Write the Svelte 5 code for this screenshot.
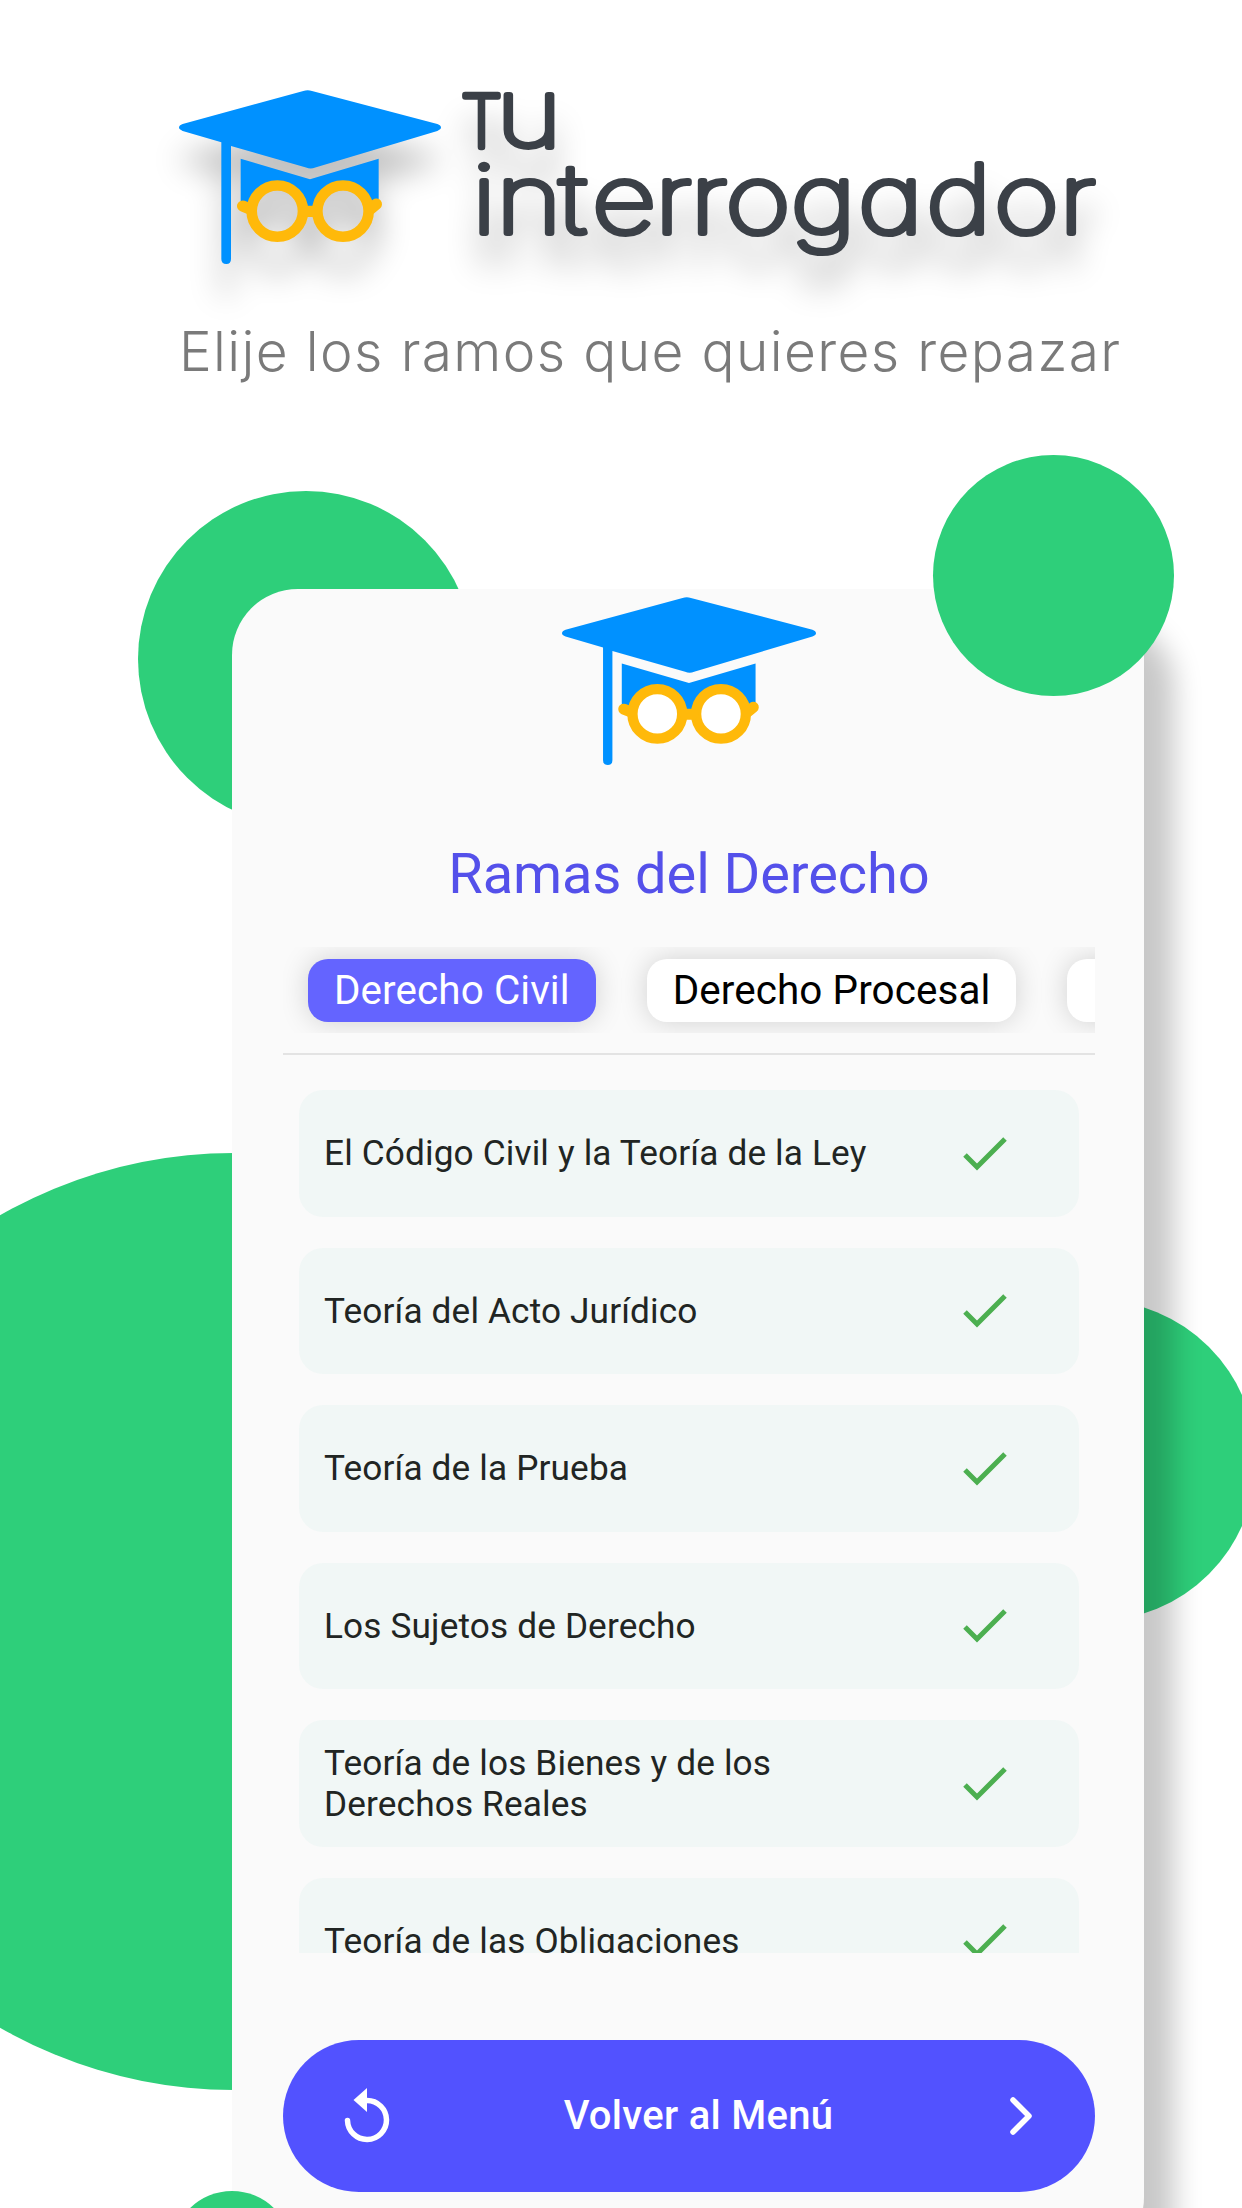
<script lang="ts">
    const tabs: string[] = ['Derecho Civil', 'Derecho Procesal', 'Derecho Penal'];

    const topics: string[] = [
        'El Código Civil y la Teoría de la Ley',
        'Teoría del Acto Jurídico',
        'Teoría de la Prueba',
        'Los Sujetos de Derecho',
        'Teoría de los Bienes y de los Derechos Reales',
        'Teoría de las Obligaciones',
    ];

    let activeTab = $state(0);
</script>

{#snippet cap(lens: string)}
    <svg class="cap" viewBox="57 59 786 523" preserveAspectRatio="none">
        <path class="blue" d="M430 62 Q443 58 456 62 L832 161 Q843 165 843 172 Q843 178 832 182 L466 292 Q452 298 438 292 L213 227 V567 Q213 582 199 582 Q184 582 184 567 V216 L68 182 Q57 178 57 172 Q57 165 68 161 Z" />
        <path class="blue" d="M242 266 L450 327 L656 266 V400 L626 423 A77 77 0 0 0 472 423 H429 A77 77 0 0 0 275 423 L242 400 Z" />
        <circle cx="352" cy="423" r="77" fill={lens} class="rim" />
        <circle cx="549" cy="423" r="77" fill={lens} class="rim" />
        <path class="arms" d="M248 408 L268 416 M632 416 L649 402" />
        <path class="bridge" d="M438 424 H462" />
    </svg>
{/snippet}

<div class="page">
    <div class="circle c1"></div>
    <div class="circle c2"></div>
    <div class="circle c3"></div>

    <header>
        <div class="brand">
            <div class="brand_cap">{@render cap('none')}</div>
            <svg class="wordmark" viewBox="0 0 660 190">
                <text class="t" x="0" y="56.800" textLength="41" lengthAdjust="spacingAndGlyphs">T</text>
                <g transform="scale(1.18 1)">
                    <text class="u" x="29.800" y="56.800">u</text>
                    <text class="word" x="9.4 29.8 83.4 111.1 164.5 194.6 224.2 279.4 336.5 394.2 451.8 507" y="143.500">interrogador</text>
                </g>
            </svg>
        </div>
        <p class="tagline">Elije los ramos que quieres repazar</p>
    </header>

    <main class="phone">
        <div class="phone_cap">{@render cap('#ffffff')}</div>
        <h1>Ramas del Derecho</h1>

        <nav class="tabs">
            {#each tabs as tab, i}
                <button class="tab" class:active={i === activeTab} onclick={() => (activeTab = i)}>{tab}</button>
            {/each}
        </nav>

        <ul class="topics">
            {#each topics as topic}
                <li>
                    <span>{topic}</span>
                    <svg class="check" width="46" height="36" viewBox="0 0 46 36">
                        <path d="M3 19 L15 31 L43 3" />
                    </svg>
                </li>
            {/each}
        </ul>

        <button class="back">
            <svg width="46" height="56" viewBox="0 0 46 56">
                <path class="line" d="M3.500 32.500 A19.500 19.500 0 1 0 23 12.500" />
                <path class="tip" d="M23 0 V24 L9.500 12 Z" />
            </svg>
            <span>Volver al Menú</span>
            <svg width="22" height="38" viewBox="0 0 22 38">
                <path class="line" d="M3 3 L19 19 L3 35" />
            </svg>
        </button>
    </main>

    <div class="circle c4"></div>
    <div class="circle c5"></div>
</div>

<style>
    :global(body) {
        background: #fff;
    }

    .page {
        position: relative;
        width: 1242px;
        height: 2208px;
        overflow: hidden;
        background: #fff;
        font-family: Roboto, "Liberation Sans", sans-serif;
    }

    /* background bubbles */
    .circle {
        position: absolute;
        border-radius: 50%;
        background: #2ecf7a;
    }

    .c1 {
        left: 138px;
        top: 491px;
        width: 336px;
        height: 336px;
    }

    .c2 {
        left: -235px;
        top: 1153px;
        width: 937px;
        height: 937px;
    }

    .c3 {
        left: 935px;
        top: 1300px;
        width: 321px;
        height: 321px;
    }

    .c4 {
        left: 933px;
        top: 455px;
        width: 241px;
        height: 241px;
    }

    .c5 {
        left: 172px;
        top: 2191px;
        width: 120px;
        height: 120px;
    }

    header {
        position: relative;
        height: 589px;
        box-sizing: border-box;
        padding: 90px 0 0 179px;
    }

    .brand {
        display: flex;
        height: 230px;
        filter: drop-shadow(0 32px 15px rgba(0, 0, 0, 0.24));
    }

    .cap {
        display: block;
        width: 100%;
        height: 100%;
    }

    .blue {
        fill: #0091ff;
    }

    .rim {
        stroke: #ffb90a;
        stroke-width: 32px;
    }

    .arms, .bridge {
        fill: none;
        stroke: #ffb90a;
        stroke-width: 34px;
        stroke-linecap: round;
    }

    .brand_cap {
        width: 262px;
        height: 174px;
    }

    .wordmark {
        width: 660px;
        height: 190px;
        margin-left: 20px;
        overflow: visible;
    }

    /* hairline weight with a thick round stroke gives the soft letter ends */
    .wordmark text {
        font-family: Inter, sans-serif;
        font-weight: 100;
        font-feature-settings: "cv11";
        fill: #3b4047;
        stroke: #3b4047;
        stroke-width: 6.500px;
        stroke-linejoin: round;
        vector-effect: non-scaling-stroke;
    }

    .t {
        font-size: 71px;
    }

    .u, .word {
        font-size: 95px;
    }

    .tagline {
        margin: -1px 0 0;
        font: 300 55px/64px Inter, sans-serif;
        letter-spacing: 1.370px;
        color: #7a7a7a;
        white-space: nowrap;
    }

    .phone {
        position: relative;
        display: flex;
        flex-direction: column;
        align-items: center;
        box-sizing: border-box;
        width: 912px;
        height: 1674px;
        margin-left: 232px;
        padding: 8px 49px 0 51px;
        border-radius: 66px;
        background: #fafafa;
        box-shadow: 30px 32px 28px rgba(0, 0, 0, 0.22);
    }

    .phone_cap {
        width: 254px;
        height: 168px;
    }

    h1 {
        margin: 76px 0 0;
        font-size: 56px;
        line-height: 66px;
        font-weight: 400;
        letter-spacing: -0.080px;
        color: #5450ea;
        white-space: nowrap;
    }

    .tabs {
        display: flex;
        gap: 51px;
        align-self: stretch;
        box-sizing: border-box;
        height: 86px;
        margin-top: 40px;
        padding: 12px 25px;
        overflow: hidden;
    }

    .tab {
        flex: none;
        height: 63px;
        padding: 1px 26px 0;
        border: 0;
        border-radius: 20px;
        background: #fff;
        color: #000;
        font: 400 40.400px/62px Roboto, sans-serif;
        letter-spacing: 0.100px;
        box-shadow: 0 0 28px rgba(0, 0, 0, 0.17);
    }

    .tab.active {
        background: #6464ff;
        color: #fff;
    }

    .topics {
        align-self: stretch;
        box-sizing: border-box;
        height: 899.500px;
        margin: 20px 0 0;
        padding: 35px 16px 0;
        border-top: 2px solid #e3e3e3;
        overflow: hidden;
        list-style: none;
    }

    li {
        display: flex;
        align-items: center;
        justify-content: space-between;
        box-sizing: border-box;
        height: 126.500px;
        margin-bottom: 31px;
        padding: 1px 71px 0 25px;
        border-radius: 24px;
        background: #f1f7f6;
        color: #212523;
        font-size: 35.200px;
        line-height: 41px;
        letter-spacing: 0.150px;
    }

    li span {
        width: 570px;
    }

    .check path {
        fill: none;
        stroke: #4caf50;
        stroke-width: 5px;
    }

    .back {
        display: flex;
        flex: none;
        align-items: center;
        justify-content: space-between;
        align-self: stretch;
        height: 152px;
        margin-top: 87.500px;
        padding: 0 63px 0 61px;
        border: 0;
        border-radius: 76px;
        background: #5252ff;
        color: #fff;
        font: 500 40px/46px Roboto, sans-serif;
        letter-spacing: 0.300px;
    }

    .back span {
        margin-right: 3px;
    }

    .line {
        fill: none;
        stroke: #fff;
        stroke-width: 5.500px;
        stroke-linecap: round;
        stroke-linejoin: round;
    }

    .tip {
        fill: #fff;
    }
</style>
